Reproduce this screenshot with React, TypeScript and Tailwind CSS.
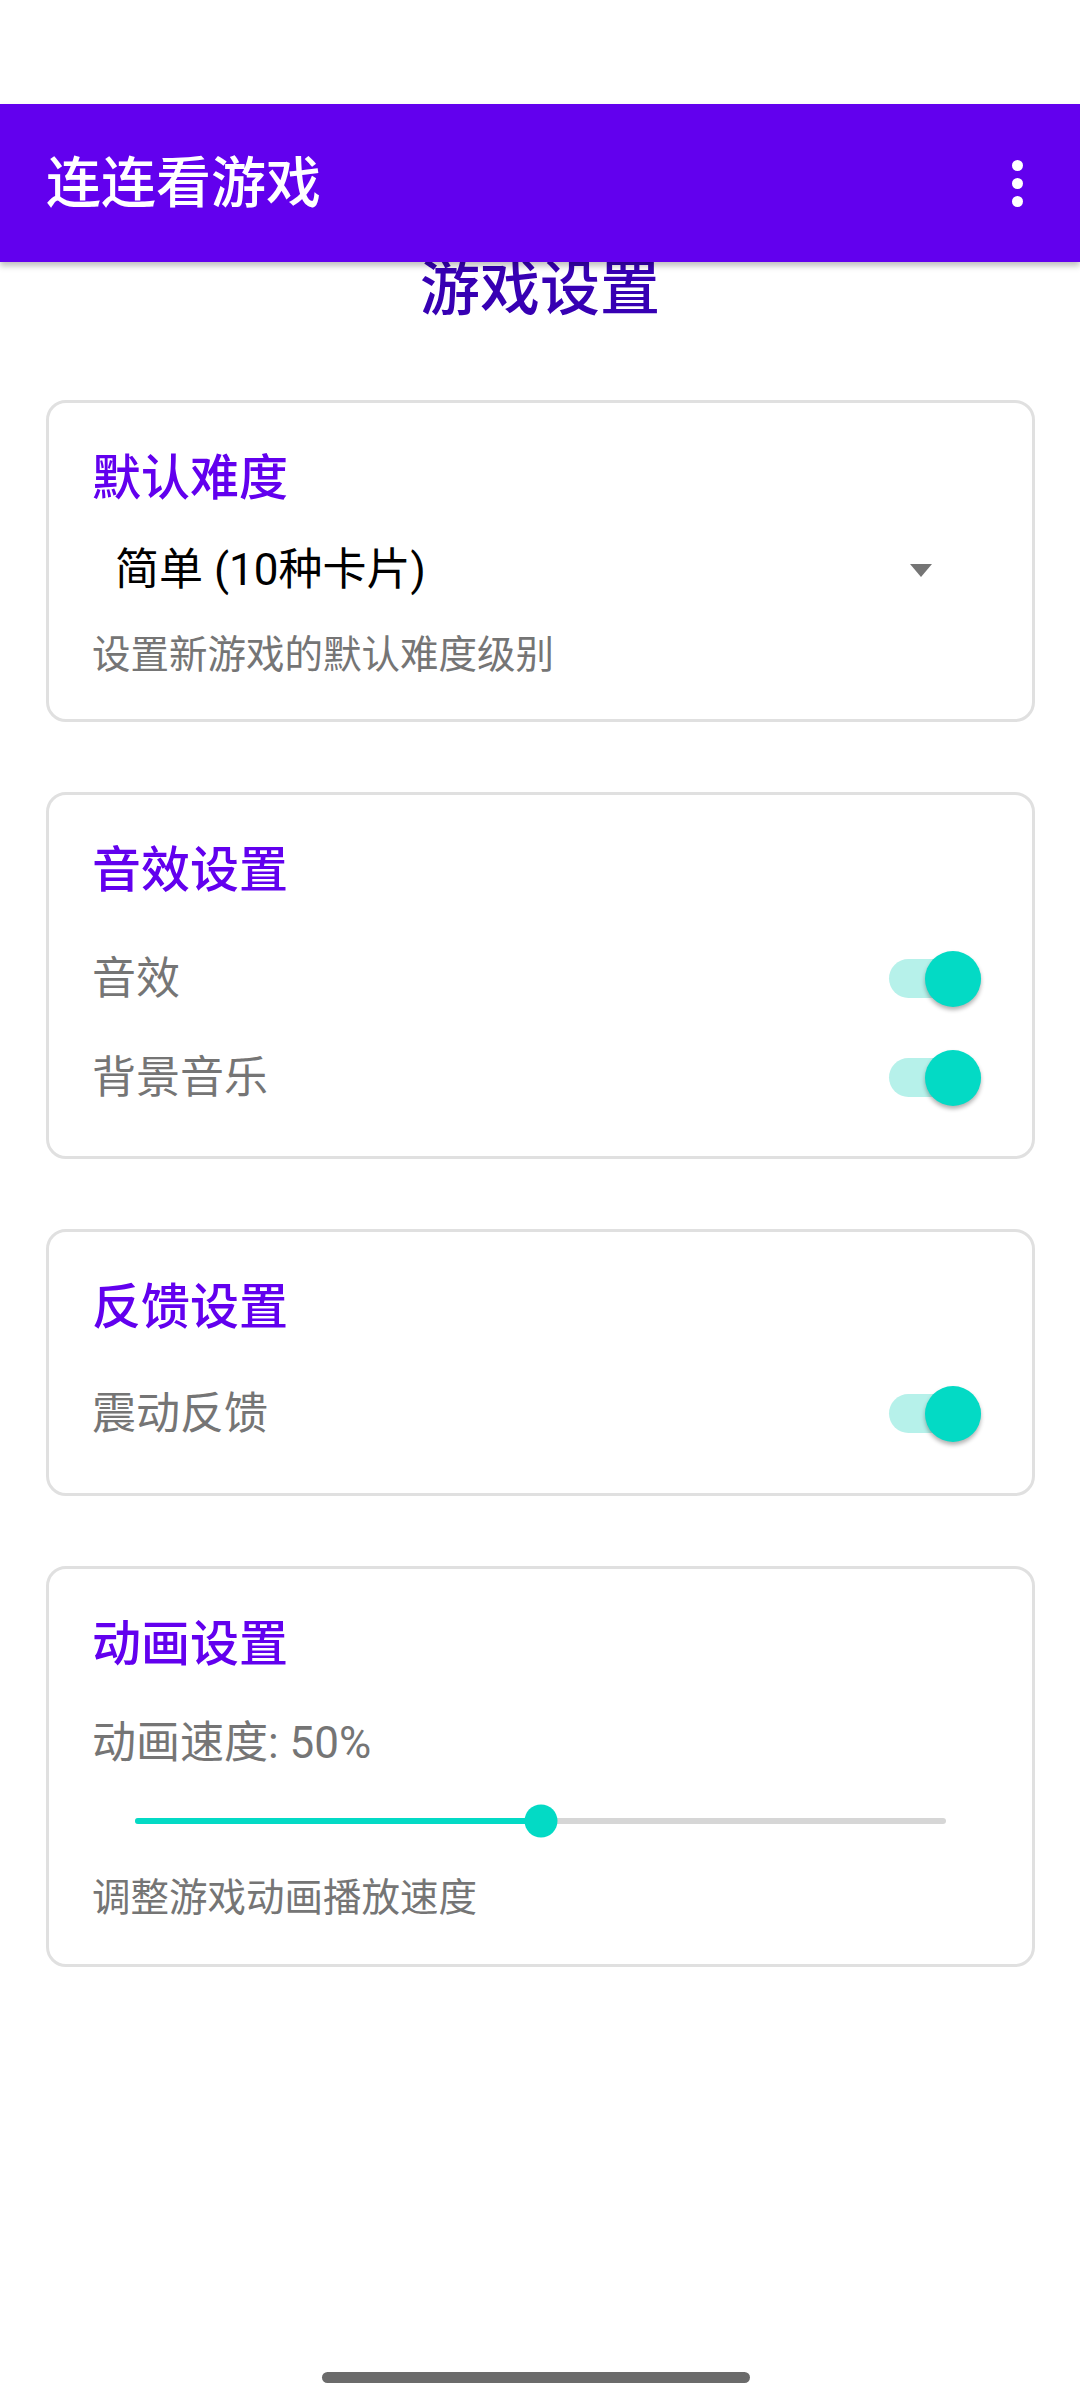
import React from 'react'

const font = { fontFamily: 'Roboto, "Noto Sans CJK SC", sans-serif' }

function Toggle() {
  return (
    <div className="relative w-[92px] h-[56px] flex items-center">
      <div className="w-[92px] h-[39px] rounded-full bg-[#b6f1ea]" />
      <div className="absolute right-0 top-0 w-[56px] h-[56px] rounded-full bg-[#03dac5] shadow-[0_3px_4px_rgba(0,0,0,0.3)]" />
    </div>
  )
}

function Row({ label }: { label: string }) {
  return (
    <div className="h-[99px] flex items-center justify-between pr-[8px]">
      <span className="text-[44px] leading-[60px] text-[#757575]">{label}</span>
      <Toggle />
    </div>
  )
}

function Card({ title, children, className }: { title: string; children: React.ReactNode; className?: string }) {
  return (
    <div className={'ml-[46px] mr-[45px] border-[3px] border-[#e0e0e0] rounded-[20px] px-[43px] pt-[46px] ' + (className ?? '')}>
      <h2 className="text-[49px] leading-[60px] font-medium text-[#6200ee]">{title}</h2>
      {children}
    </div>
  )
}

export default function App() {
  return (
    <div className="w-[1080px] h-[2400px] bg-white relative overflow-hidden" style={font}>
      <div className="h-[104px] bg-white" />
      <div className="relative z-10 h-[158px] bg-[#6200ee] flex items-center justify-between pl-[46px] pr-[57px] shadow-[0_4px_6px_rgba(0,0,0,0.25)]">
        <span className="text-[55px] font-medium text-white leading-none">连连看游戏</span>
        <div className="flex flex-col gap-[7px]">
          <div className="w-[11px] h-[11px] rounded-full bg-white" />
          <div className="w-[11px] h-[11px] rounded-full bg-white" />
          <div className="w-[11px] h-[11px] rounded-full bg-white" />
        </div>
      </div>

      <h1 className="mt-[-7px] text-center text-[60px] leading-[70px] font-medium text-[#3700b3]">游戏设置</h1>

      <div className="mt-[75px] flex flex-col gap-[70px]">
        <Card title="默认难度" className="pb-[39px]">
          <div className="mt-[11px] h-[100px] flex items-center justify-between pl-[23px] pr-[57px]">
            <span className="text-[44px] leading-[60px] text-black">简单 (10种卡片)</span>
            <svg width="22" height="13" viewBox="0 0 22 13">
              <path d="M0 0 L22 0 L11 13 Z" fill="#757575" />
            </svg>
          </div>
          <p className="mt-[10px] text-[38.5px] leading-[50px] text-[#757575]">设置新游戏的默认难度级别</p>
        </Card>

        <Card title="音效设置" className="pb-[29px]">
          <div className="mt-[28px]">
            <Row label="音效" />
            <Row label="背景音乐" />
          </div>
        </Card>

        <Card title="反馈设置" className="pb-[30px]">
          <div className="mt-[26px]">
            <Row label="震动反馈" />
          </div>
        </Card>

        <Card title="动画设置" className="pb-[41px]">
          <p className="mt-[38px] text-[44px] leading-[60px] text-[#757575]">动画速度: 50%</p>
          <div className="mt-[24px] h-[48px] px-[43px] flex items-center">
            <div className="relative w-full h-[6px] bg-[#d6d6d6] rounded-full">
              <div className="absolute left-0 top-0 h-[6px] w-1/2 bg-[#03dac5] rounded-full" />
              <div className="absolute left-1/2 top-1/2 -translate-x-1/2 -translate-y-1/2 w-[33px] h-[33px] rounded-full bg-[#03dac5]" />
            </div>
          </div>
          <p className="mt-[28px] text-[38.5px] leading-[50px] text-[#757575]">调整游戏动画播放速度</p>
        </Card>
      </div>

      <div className="absolute left-[322px] top-[2372px] w-[428px] h-[11px] rounded-full bg-[#6b6b6b]" />
    </div>
  )
}
